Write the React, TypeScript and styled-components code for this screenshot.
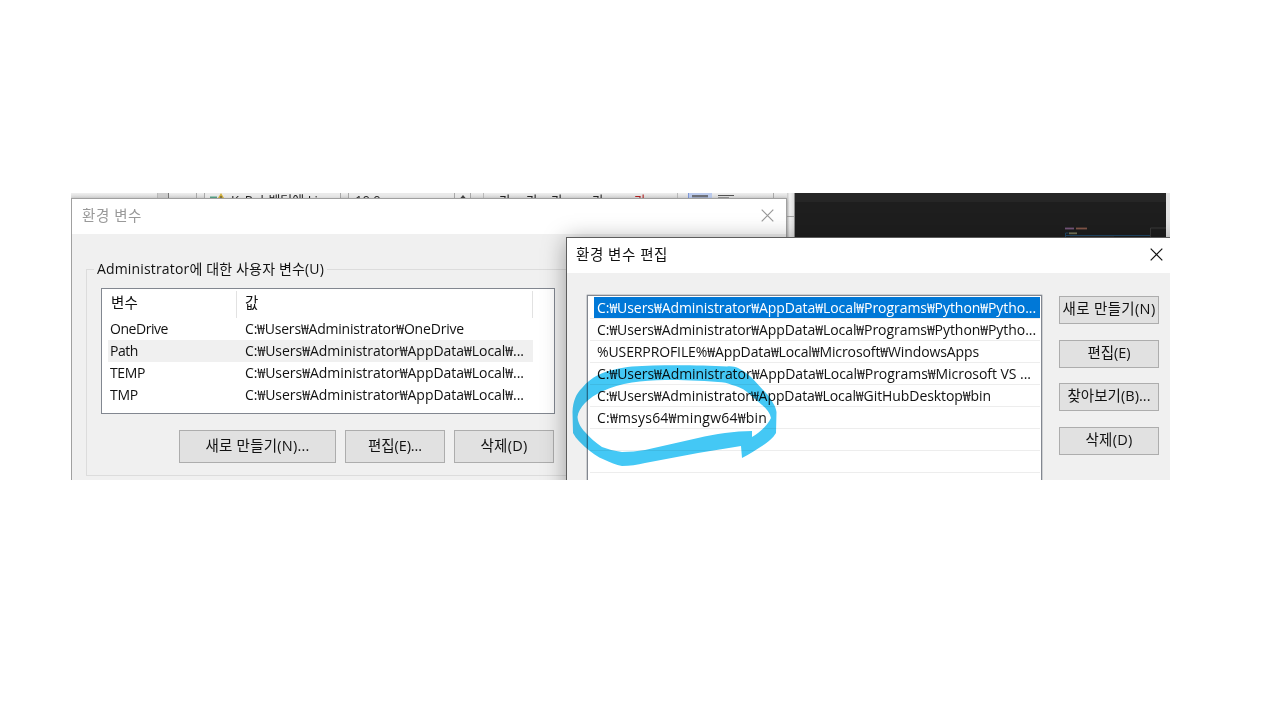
import React, { useLayoutEffect, useRef, useState } from "react";
import styled, { createGlobalStyle } from "styled-components";

const Global = createGlobalStyle`
  * { box-sizing: border-box; }
  html, body { margin: 0; background: #fff; }
  body { font-family: "Open Sans", "Noto Sans CJK KR", sans-serif; font-size: 14px; color: #111; }
`;

const Page = styled.main`
  width: 1280px;
  height: 720px;
  padding: 193px 0 0 71px;
  overflow: hidden;
`;

const Desktop = styled.div`
  position: relative;
  width: 1099px;
  height: 287px;
  overflow: hidden;
  background: #e4e4e4;
`;

/* Text whose tracking is adjusted so that it spans a known width. */
const TextRun = styled.span<{ $size: number }>`
  display: inline-block;
  font-size: ${(p) => p.$size}px;
  white-space: pre;
  line-height: 20px;
`;

function Fit({ w, size = 14, children }: { w: number; size?: number; children: string }) {
  const ref = useRef<HTMLSpanElement>(null);
  const [spacing, setSpacing] = useState(0);
  useLayoutEffect(() => {
    if (ref.current) {
      ref.current.style.letterSpacing = "0px";
      const natural = ref.current.getBoundingClientRect().width;
      const next = (w - natural) / children.length;
      ref.current.style.letterSpacing = `${next}px`;
      setSpacing(next);
    }
  }, [w, children]);
  return (
    <TextRun ref={ref} $size={size} style={{ letterSpacing: spacing }}>
      {children}
    </TextRun>
  );
}

/* ---- application behind the dialogs ---- */
const Backdrop = styled.div`
  display: flex;
  height: 45px;
`;
const Ribbon = styled.div`
  display: flex;
  width: 716px;
  height: 24px;
  background: linear-gradient(#efefef, #d6d6d6 6px);
`;
const RibbonCell = styled.div<{ $w: number; $bg?: string; $line?: string; $c?: string; $pad?: number }>`
  flex: none;
  width: ${(p) => p.$w}px;
  height: 24px;
  padding-left: ${(p) => p.$pad ?? 0}px;
  background: ${(p) => p.$bg ?? "transparent"};
  border-left: ${(p) => (p.$line ? `1px solid ${p.$line}` : "0")};
  color: ${(p) => p.$c ?? "#222"};
  font-size: 13px;
  line-height: 14px;
  white-space: pre;
  svg { display: block; }
`;
const Gutter = styled.div`
  width: 8px;
  height: 45px;
  background: linear-gradient(90deg, #c9c9c9, #f3f3f3 40%, #dcdcdc);
  border-right: 1px solid #8c8c8c;
`;
const GutterTop = styled.div`
  height: 24px;
  border-bottom: 1px solid #a5a5a5;
`;
const Editor = styled.div`
  display: flex;
  justify-content: flex-end;
  width: 371px;
  height: 45px;
  background: linear-gradient(#262626 0 9px, #1e1e1e 9px);
`;
const Code = styled.svg`
  display: block;
  width: 110px;
  height: 45px;
`;

/* ---- dialogs ---- */
const Dialog = styled.section<{ $x: number; $y: number; $w: number; $active?: boolean }>`
  position: absolute;
  left: ${(p) => p.$x}px;
  top: ${(p) => p.$y}px;
  width: ${(p) => p.$w}px;
  height: 330px;
  background: #f0f0f0;
  border: 1px solid ${(p) => (p.$active ? "#5c5c5c" : "#a0a0a0")};
  box-shadow: ${(p) => (p.$active ? "0 3px 22px rgba(0,0,0,.36)" : "0 1px 4px rgba(0,0,0,.25)")};
`;
const TitleBar = styled.header<{ $muted?: boolean; $padR: number }>`
  display: flex;
  align-items: center;
  justify-content: space-between;
  height: 35px;
  padding: 0 ${(p) => p.$padR}px 2px ${(p) => (p.$muted ? 10 : 9)}px;
  background: ${(p) => (p.$muted ? "transparent" : "#fff")};
  background: #fff;
  color: ${(p) => (p.$muted ? "#999" : "#111")};
`;
const CloseIcon = styled.svg`
  width: 13px;
  height: 13px;
  fill: none;
  stroke: currentColor;
  stroke-width: 1.2;
`;
const Group = styled.fieldset`
  width: 520px;
  height: 217px;
  margin: 25px 0 0 14px;
  padding: 9px 0 0 14px;
  border: 1px solid #dcdcdc;
`;
const Legend = styled.legend`
  height: 20px;
  margin-left: -7px;
  padding: 0 3px;
`;
const VariableTable = styled.div`
  width: 454px;
  height: 126px;
  padding: 2px 0 0 6px;
  background: #fff;
  border: 1px solid #828790;
`;
const VariableRow = styled.div<{ $head?: boolean; $selected?: boolean }>`
  display: grid;
  grid-template-columns: 129px 296px;
  align-items: center;
  width: 425px;
  height: ${(p) => (p.$head ? 27 : 22)}px;
  background: ${(p) => (p.$selected ? "#f0f0f0" : "transparent")};
  > div {
    display: flex;
    align-items: center;
    height: 100%;
    padding: 0 0 ${(p) => (p.$head ? 4 : 0)}px ${(p) => (p.$head ? 3 : 2)}px;
    border-right: 1px solid ${(p) => (p.$head ? "#e2e2e2" : "transparent")};
  }
  > div + div { padding-left: 8px; }
`;
const Actions = styled.div`
  display: flex;
  gap: 9px;
  padding: 16px 0 0 78px;
`;
const Button = styled.button<{ $w: number; $h: number }>`
  display: flex;
  flex: none;
  align-items: center;
  justify-content: center;
  width: ${(p) => p.$w}px;
  height: ${(p) => p.$h}px;
  padding: 0 0 2px;
  font: inherit;
  color: inherit;
  background: #e1e1e1;
  border: 1px solid #adadad;
`;
const EditBody = styled.div`
  display: flex;
  gap: 17px;
  padding: 22px 0 0 20px;
`;
const PathList = styled.div`
  width: 455px;
  height: 260px;
  padding: 1px 1px 0 2px;
  background: #fff;
  border: 1px solid #828790;
  box-shadow: 0 0 0 .3px #828790;
`;
const PathRow = styled.div<{ $selected?: boolean }>`
  display: flex;
  height: 22px;
  padding-left: 4px;
  border-bottom: 1px solid #ededed;
  color: ${(p) => (p.$selected ? "#fff" : "inherit")};
  > div {
    display: flex;
    flex: 1;
    align-items: center;
    padding-left: 3px;
    background: ${(p) => (p.$selected ? "#0078d7" : "transparent")};
  }
`;
const SideButtons = styled.div`
  display: flex;
  flex-direction: column;
  gap: 15.500px;
  padding-top: 1px;
`;
const Marker = styled.svg`
  position: absolute;
  left: 494px;
  top: 162px;
  width: 220px;
  height: 120px;
  mix-blend-mode: multiply;
`;

const variables: [string, number, string, number][] = [
  ["OneDrive", 58, "C:₩Users₩Administrator₩OneDrive", 219],
  ["Path", 28, "C:₩Users₩Administrator₩AppData₩Local₩...", 279],
  ["TEMP", 35, "C:₩Users₩Administrator₩AppData₩Local₩...", 279],
  ["TMP", 28, "C:₩Users₩Administrator₩AppData₩Local₩...", 279],
];

const paths: [string, number][] = [
  ["C:₩Users₩Administrator₩AppData₩Local₩Programs₩Python₩Pytho...", 439],
  ["C:₩Users₩Administrator₩AppData₩Local₩Programs₩Python₩Pytho...", 439],
  ["%USERPROFILE%₩AppData₩Local₩Microsoft₩WindowsApps", 382],
  ["C:₩Users₩Administrator₩AppData₩Local₩Programs₩Microsoft VS ...", 434],
  ["C:₩Users₩Administrator₩AppData₩Local₩GitHubDesktop₩bin", 394],
  ["C:₩msys64₩mingw64₩bin", 170],
  ["", 0],
  ["", 0],
  ["", 0],
];

const Close = () => (
  <CloseIcon viewBox="0 0 13 13">
    <path d="M.7.7l11.6 11.6M12.3.7L.7 12.3" />
  </CloseIcon>
);

export default function App() {
  return (
    <Page>
      <Global />
      <Desktop>
        <Backdrop>
          <Ribbon>
            <RibbonCell $w={86} />
            <RibbonCell $w={11} $bg="#cfcfcf" $line="#bbb" />
            <RibbonCell $w={28} $line="#777" />
            <RibbonCell $w={8} $line="#aaa" />
            <RibbonCell $w={26} $line="#aaa" $bg="#ebebeb" $pad={4}>
              <svg width="18" height="12" viewBox="0 0 18 12">
                <path d="M1 3.500h7v2H1z" fill="#5aa58a" />
                <path d="M12 0l6 10H6z" fill="#d3b23c" />
                <path d="M12 3v5" stroke="#444" />
              </svg>
            </RibbonCell>
            <RibbonCell $w={110} $bg="#ebebeb" $pad={1}>K_Pub벡터에 Li</RibbonCell>
            <RibbonCell $w={8} $line="#aaa" />
            <RibbonCell $w={106} $line="#aaa" $bg="#ebebeb" $pad={6}>10.0</RibbonCell>
            <RibbonCell $w={16} $line="#aaa" $bg="#ebebeb" $pad={5}>
              <svg width="6" height="6"><path d="M0 5.500L3 2l3 3.500z" fill="#444" /></svg>
            </RibbonCell>
            <RibbonCell $w={13} $line="#aaa" />
            <RibbonCell $w={16} $line="#bbb" />
            <RibbonCell $w={27}>가</RibbonCell>
            <RibbonCell $w={25}>가</RibbonCell>
            <RibbonCell $w={41}>가</RibbonCell>
            <RibbonCell $w={42}>가</RibbonCell>
            <RibbonCell $w={43} $c="#b22222">가</RibbonCell>
            <RibbonCell $w={11} $line="#bbb" />
            <RibbonCell $w={24} $bg="#bccbed" $line="#7f98d8">
              <svg width="22" height="8"><path d="M3 3h16M3 5.500h16" stroke="#555" strokeWidth="1.300" /></svg>
            </RibbonCell>
            <RibbonCell $w={61}>
              <svg width="30" height="8"><path d="M6 2.500h16M6 5h11" stroke="#555" strokeWidth="1.200" /></svg>
            </RibbonCell>
            <RibbonCell $w={15} $line="#aaa" />
          </Ribbon>
          <Gutter>
            <GutterTop />
          </Gutter>
          <Editor>
            <Code viewBox="0 0 110 45">
              <path d="M9 35.500h9" stroke="#76567b" strokeWidth="1.800" />
              <path d="M20 35.500h11" stroke="#85574a" strokeWidth="1.800" />
              <path d="M13 40.300h8" stroke="#77775a" strokeWidth="1.800" />
              <path d="M9.500 45v-5h3M9 42.500h86" stroke="#214a6a" fill="none" />
              <path d="M14 44.300h44" stroke="#5d4a48" />
              <path d="M94.500 44v-9H110" stroke="#3b3b3b" fill="none" />
            </Code>
          </Editor>
        </Backdrop>

        <Dialog $x={0} $y={5} $w={716}>
          <TitleBar $muted $padR={12}>
            <Fit w={60} size={14.5}>환경 변수</Fit>
            <Close />
          </TitleBar>
          <Group>
            <Legend>
              <Fit w={227}>Administrator에 대한 사용자 변수(U)</Fit>
            </Legend>
            <VariableTable>
              <VariableRow $head>
                <div><Fit w={27} size={14.5}>변수</Fit></div>
                <div><Fit w={14} size={14.5}>값</Fit></div>
              </VariableRow>
              {variables.map(([name, nw, value, vw]) => (
                <VariableRow key={name} $selected={name === "Path"}>
                  <div><Fit w={nw}>{name}</Fit></div>
                  <div><Fit w={vw}>{value}</Fit></div>
                </VariableRow>
              ))}
            </VariableTable>
            <Actions>
              <Button $w={157} $h={33}><Fit w={104} size={14.5}>새로 만들기(N)...</Fit></Button>
              <Button $w={100} $h={33}><Fit w={54} size={14.5}>편집(E)...</Fit></Button>
              <Button $w={100} $h={33}><Fit w={47} size={14.5}>삭제(D)</Fit></Button>
            </Actions>
          </Group>
        </Dialog>

        <Dialog $x={495} $y={44} $w={620} $active>
          <TitleBar $padR={22}>
            <Fit w={92} size={14.5}>환경 변수 편집</Fit>
            <Close />
          </TitleBar>
          <EditBody>
            <PathList>
              {paths.map(([path, w], i) => (
                <PathRow key={i} $selected={i === 0}>
                  <div>{path && <Fit w={w}>{path}</Fit>}</div>
                </PathRow>
              ))}
            </PathList>
            <SideButtons>
              <Button $w={100} $h={28}><Fit w={93} size={14.5}>새로 만들기(N)</Fit></Button>
              <Button $w={100} $h={28}><Fit w={43} size={14.5}>편집(E)</Fit></Button>
              <Button $w={100} $h={28}><Fit w={83} size={14.5}>찾아보기(B)...</Fit></Button>
              <Button $w={100} $h={28}><Fit w={47} size={14.5}>삭제(D)</Fit></Button>
            </SideButtons>
          </EditBody>
        </Dialog>

        <Marker viewBox="565 355 220 120">
          <path
            fill="#44c8f5"
            fillRule="evenodd"
            d="M572.500 412C573 401 576 394 582 388C587 382 592 378 598 375C609 370 620 368 632 366.500C660 364.500 700 365 727 366.500C732 366 735 367 738 368C744 371 748 374 752 378L765 392C769 396 771 399 773 403C775 406 776 409 776.500 412L776 433C773 438 769 441 765 444C757 449 750 454 742 458L741 446C727 448 712 451 698 453L645 463C637 465 630 466 622 466C616 465 610 462 605 460C597 457 591 452 585 447C581 443 576 439 573 433ZM577.500 417C578 423 581 428 585 432C590 438 596 443 602 447C608 449 614 451 622 452C630 452 637 451 645 450L698 438C715 434 735 431 752 431L752 437C760 432 767 426 771 418C770 413 767 409 762 405L747 392C742 388 737 386 732 385C728 383 723 382 718 382C700 380.500 682 380 665 380C654 380 642 381 632 382.500C621 384 611 387 602 391.500C596 394 590 398 585 403C581 407 578 412 577.500 417Z"
          />
        </Marker>
      </Desktop>
    </Page>
  );
}
